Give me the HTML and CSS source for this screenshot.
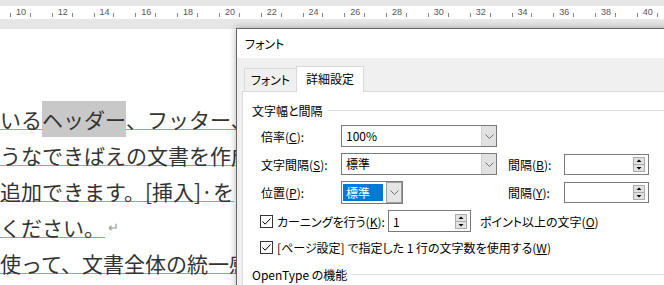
FILE: index.html
```html
<!DOCTYPE html>
<html lang="ja">
<head>
  <meta charset="UTF-8">
  <title>フォント</title>
  <link rel="stylesheet" href="styles.css">
</head>
<body>
  <div class="ruler">
    <div class="scale">
      <span class="mark">10</span><span class="mark">12</span><span class="mark">14</span><span class="mark">16</span>
      <span class="mark">18</span><span class="mark">20</span><span class="mark">22</span><span class="mark">24</span>
      <span class="mark">26</span><span class="mark">28</span><span class="mark">30</span><span class="mark">32</span>
      <span class="mark">34</span><span class="mark">36</span><span class="mark">38</span><span class="mark">40</span>
    </div>
    <div class="rmargin">
      <svg class="indent" width="9" height="10" viewBox="0 0 9 10"><path d="M0.5 9.5 V5.5 L4.5 0.8 L8.5 5.5 V9.5 Z" fill="#fff" stroke="#8a8a8a"/></svg>
    </div>
  </div>

  <div class="page">
    <div class="line"><span class="u">いる</span><span class="hl">ヘッダー</span><span class="u">、フッター、表紙</span></div>
    <div class="line"><span class="u">うなできばえの文書を作成</span></div>
    <div class="line"><span class="u">追加できます。[挿入]·を</span></div>
    <div class="line"><span class="u">ください。</span><span class="ret">↵</span></div>
    <div class="line"><span class="u">使って、文書全体の統一感</span></div>
  </div>

  <div class="dialog">
    <div class="titlebar">フォント</div>
    <div class="tabs">
      <div class="tab">フォント</div>
      <div class="tab active">詳細設定</div>
    </div>
    <div class="panel">
      <div class="group">文字幅と間隔</div>

      <div class="row r1">
        <span class="lbl">倍率(<u>C</u>):</span>
        <div class="combo wide">
          <span class="val">100%</span>
          <span class="drop"><svg width="9" height="5" viewBox="0 0 9 5"><path d="M0.5 0.5 L4.5 4.5 L8.5 0.5" fill="none" stroke="#707070"/></svg></span>
        </div>
      </div>

      <div class="row r2">
        <span class="lbl">文字間隔(<u>S</u>):</span>
        <div class="combo wide">
          <span class="val">標準</span>
          <span class="drop"><svg width="9" height="5" viewBox="0 0 9 5"><path d="M0.5 0.5 L4.5 4.5 L8.5 0.5" fill="none" stroke="#707070"/></svg></span>
        </div>
        <span class="lbl2">間隔(<u>B</u>):</span>
        <div class="spin">
          <svg class="arrows" width="12" height="15" viewBox="0 0 12 15"><rect x="0.5" y="0.5" width="11" height="14" fill="#e1e1e1" stroke="#adadad"/><line x1="1" y1="7.5" x2="11" y2="7.5" stroke="#adadad"/><path d="M3.5 5 L6 2.5 L8.5 5 Z" fill="#000"/><path d="M3.5 10 L6 12.5 L8.5 10 Z" fill="#000"/></svg>
        </div>
      </div>

      <div class="row r3">
        <span class="lbl">位置(<u>P</u>):</span>
        <div class="field">
          <div class="combo small">
            <span class="val"><span class="sel">標準</span></span>
            <span class="drop"><svg width="9" height="5" viewBox="0 0 9 5"><path d="M0.5 0.5 L4.5 4.5 L8.5 0.5" fill="none" stroke="#707070"/></svg></span>
          </div>
        </div>
        <span class="lbl2">間隔(<u>Y</u>):</span>
        <div class="spin">
          <svg class="arrows" width="12" height="15" viewBox="0 0 12 15"><rect x="0.5" y="0.5" width="11" height="14" fill="#e1e1e1" stroke="#adadad"/><line x1="1" y1="7.5" x2="11" y2="7.5" stroke="#adadad"/><path d="M3.5 5 L6 2.5 L8.5 5 Z" fill="#000"/><path d="M3.5 10 L6 12.5 L8.5 10 Z" fill="#000"/></svg>
        </div>
      </div>

      <div class="row r4">
        <label class="check kern">
          <span class="box"><svg width="11" height="11" viewBox="0 0 11 11"><path d="M1.5 5.5 L4.2 8.2 L9.5 2.5" fill="none" stroke="#000"/></svg></span>
          カーニングを行う(<u>K</u>):
        </label>
        <div class="spin short">
          <span class="num">1</span>
          <svg class="arrows" width="12" height="15" viewBox="0 0 12 15"><rect x="0.5" y="0.5" width="11" height="14" fill="#e1e1e1" stroke="#adadad"/><line x1="1" y1="7.5" x2="11" y2="7.5" stroke="#adadad"/><path d="M3.5 5 L6 2.5 L8.5 5 Z" fill="#000"/><path d="M3.5 10 L6 12.5 L8.5 10 Z" fill="#000"/></svg>
        </div>
        <span class="after">ポイント以上の文字(<u>O</u>)</span>
      </div>

      <div class="row r5">
        <label class="check">
          <span class="box"><svg width="11" height="11" viewBox="0 0 11 11"><path d="M1.5 5.5 L4.2 8.2 L9.5 2.5" fill="none" stroke="#000"/></svg></span>
          [ページ設定] で指定した 1 行の文字数を使用する(<u>W</u>)
        </label>
      </div>

      <div class="group opentype">OpenType の機能</div>
    </div>
  </div>
</body>
</html>
```

FILE: styles.css
```css
body {
  margin: 0;
  width: 664px;
  height: 285px;
  overflow: hidden;
  position: relative;
  background: #fff;
  font-family: "Noto Sans CJK JP", sans-serif;
}

/* ruler */
.ruler {
  height: 29px;
  box-sizing: border-box;
  padding-top: 6px;
  background: #e6e6e6;
  display: flex;
  align-items: flex-start;
}
.scale {
  flex: 0 0 655px;
  height: 13px;
  background: #fff;
  display: flex;
}
.mark {
  flex: 0 0 41.8px;
  position: relative;
  text-align: center;
  font: 9px/13px "Liberation Sans", sans-serif;
  color: #555;
}
.mark::before,
.mark::after {
  content: "";
  position: absolute;
  top: 7px;
  width: 1px;
  height: 4px;
  background: #888;
}
.mark::before { left: 10px; }
.mark::after { right: 11px; }
.rmargin {
  flex: 1;
  height: 13px;
  background: #c4c4c4;
  position: relative;
}
.indent {
  position: absolute;
  left: 0;
  top: 7px;
}

/* document */
.page {
  padding-top: 72px;
}
.line {
  display: flex;
  height: 36px;
  white-space: nowrap;
  font-size: 21px;
  color: #333;
  overflow: hidden;
}
.u, .hl, .ret {
  flex: none;
  padding-top: 8px;
  line-height: 20px;
}
.u {
  height: 20px;
  border-bottom: 1px solid #3ec6da;
}
.hl {
  height: 28px;
  background: #c8c8c8;
}
.ret {
  font-size: 13px;
  color: #9a9a9a;
  margin-left: 3px;
}

/* dialog */
.dialog {
  position: absolute;
  left: 236px;
  top: 28px;
  width: 440px;
  height: 280px;
  border: 1px solid #666;
  background: #f0f0f0;
  box-shadow: 0 0 7px rgba(0, 0, 0, 0.3);
  font-size: 12px;
  font-feature-settings: "palt";
  color: #000;
}
.titlebar {
  height: 29px;
  line-height: 29px;
  padding-left: 8px;
  background: #fff;
}
.tabs {
  display: flex;
  align-items: flex-end;
  height: 24px;
  margin: 9px 0 0 7px;
}
.tab {
  box-sizing: border-box;
  width: 52px;
  height: 23px;
  line-height: 22px;
  text-align: center;
  border: 1px solid #d9d9d9;
  border-right: 0;
  border-bottom: 0;
}
.tab.active {
  width: 68px;
  height: 26px;
  line-height: 23px;
  margin-bottom: -1px;
  background: #fff;
  border-right: 1px solid #d9d9d9;
  position: relative;
  z-index: 1;
}
.panel {
  margin-left: 5px;
  height: 200px;
  background: #fff;
  border-top: 1px solid #d9d9d9;
  border-left: 1px solid #d9d9d9;
}
.group {
  display: flex;
  align-items: center;
  height: 16px;
  margin-top: 10px;
  padding-left: 9px;
}
.group::after {
  content: "";
  flex: 1;
  height: 1px;
  margin-left: 5px;
  background: #dcdcdc;
}
.group.opentype {
  margin-top: 11px;
}
.row {
  display: flex;
  align-items: center;
  padding-left: 18px;
  height: 22px;
  margin-top: 6px;
}
.row.r1 { margin-top: 7px; }
.row.r3 { height: 23px; }
.row.r5 { height: 16px; margin-top: 7px; }
.lbl {
  flex: 0 0 80px;
}
.lbl2 {
  flex: 0 0 56px;
  margin-left: 11px;
}
.combo {
  box-sizing: border-box;
  display: flex;
  align-items: stretch;
  border: 1px solid #7a7a7a;
  background: #fff;
}
.combo.wide {
  width: 156px;
  height: 22px;
}
.field {
  flex: 0 0 156px;
}
.combo.small {
  width: 62px;
  height: 23px;
}
.val {
  flex: 1;
  padding-left: 4px;
  line-height: 20px;
}
.drop {
  box-sizing: border-box;
  flex: 0 0 15px;
  display: flex;
  align-items: center;
  justify-content: center;
  background: #e1e1e1;
  border-left: 1px solid #d0d0d0;
}
.combo.small .val {
  padding: 2px 0 0 1px;
}
.sel {
  display: block;
  width: 37px;
  height: 17px;
  line-height: 17px;
  padding-left: 3px;
  background: #0078d7;
  color: #fff;
}
.combo.small .drop {
  flex-basis: 16px;
  border: 1px solid #a0a0a0;
  background: #e5e5e5;
}
.spin {
  box-sizing: border-box;
  width: 85px;
  height: 21px;
  display: flex;
  align-items: center;
  justify-content: flex-end;
  border: 1px solid #7a7a7a;
  background: #fff;
}
.arrows {
  margin-right: 3px;
}
.spin.short {
  width: 83px;
  height: 22px;
}
.num {
  flex: 1;
  padding-left: 4px;
}
.check {
  display: flex;
  align-items: center;
  margin-left: -1px;
}
.check.kern {
  flex: 0 0 128px;
}
.box {
  box-sizing: border-box;
  width: 13px;
  height: 13px;
  margin-right: 4px;
  border: 1px solid #333;
  background: #fff;
  display: flex;
}
.after {
  margin-left: 9px;
}
```
